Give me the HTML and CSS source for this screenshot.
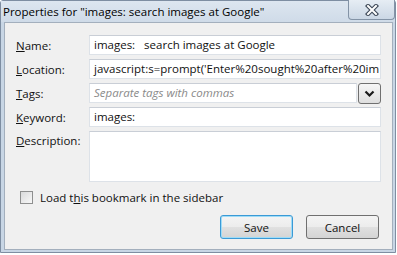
FILE: index.html
```html
<!DOCTYPE html>
<html>
<head>
<meta charset="utf-8">
<link rel="stylesheet" href="styles.css">
</head>
<body>
<div class="window">
  <div class="titlebar">
    <span class="title">Properties for "images: search images at Google"</span>
    <div class="close">
      <svg width="16" height="12" viewBox="0 0 16 12">
        <path d="M4 2 L12 10 M12 2 L4 10" stroke="#3b4656" stroke-width="4.2" stroke-linecap="square" fill="none"/>
        <path d="M4 2 L12 10 M12 2 L4 10" stroke="#ffffff" stroke-width="2" stroke-linecap="square" fill="none"/>
      </svg>
    </div>
  </div>
  <div class="panel">
    <div class="form">
      <div class="lbl"><u>N</u>ame:</div>
      <div class="input">images:&nbsp;&nbsp; search images at Google</div>
      <div class="lbl"><u>L</u>ocation:</div>
      <div class="input">javascript:s=prompt('Enter%20sought%20after%20im</div>
      <div class="lbl"><u>T</u>ags:</div>
      <div class="tagrow">
        <div class="input placeholder">Separate tags with commas</div>
        <div class="drop">
          <svg width="11" height="8" viewBox="0 0 11 8"><path d="M1.5 1.5 L5.5 5.5 L9.5 1.5" stroke="#1a1a1a" stroke-width="2.2" fill="none"/></svg>
        </div>
      </div>
      <div class="lbl"><u>K</u>eyword:</div>
      <div class="input">images:</div>
      <div class="lbl top"><u>D</u>escription:</div>
      <div class="input area"></div>
    </div>
    <div class="check">
      <span class="box"></span>
      <span>Load t<u>h</u>is bookmark in the sidebar</span>
    </div>
    <div class="buttons">
      <div class="btn default">Save</div>
      <div class="btn">Cancel</div>
    </div>
  </div>
</div>
</body>
</html>
```
FILE: styles.css
```css
html, body {
  margin: 0;
  padding: 0;
  background: #ffffff;
}
body {
  font-family: "Open Sans", "Noto Sans", sans-serif;
  font-size: 11.5px;
  color: #111;
}
.window {
  box-sizing: border-box;
  width: 396px;
  height: 253px;
  border: 1px solid #7e8ea2;
  border-radius: 3px 3px 0 0;
  background: #c8d6e5;
  display: flex;
  flex-direction: column;
}
.titlebar {
  height: 21px;
  display: flex;
  align-items: flex-start;
  background: linear-gradient(#dde6f0, #cfdbe8);
}
.title {
  padding: 3px 0 0 2px;
  font-size: 11.5px;
  line-height: 16px;
  color: #000;
}
.close {
  margin-left: auto;
  margin-top: -1px;
  margin-right: 0;
  box-sizing: border-box;
  width: 47px;
  height: 20px;
  border: 1px solid #8393a6;
  border-top: none;
  border-radius: 0 0 4px 4px;
  background: linear-gradient(#e6edf4, #cbd7e5);
  display: flex;
  align-items: center;
  justify-content: center;
}
.panel {
  flex: 1;
  margin: 0 2px 2px 3px;
  border: 1px solid #a3afbd;
  background: #f0f0f0;
  padding: 12px 11px 9px 11px;
  display: flex;
  flex-direction: column;
}
.form {
  display: grid;
  grid-template-columns: 73px 1fr;
  grid-template-rows: 20px 20px 20px 20px 51px;
  row-gap: 4px;
}
.lbl {
  display: flex;
  align-items: center;
  color: #111;
}
.lbl.top {
  align-items: flex-start;
  padding-top: 2px;
}
.input {
  box-sizing: border-box;
  height: 20px;
  background: #fff;
  border: 1px solid #dde2e8;
  border-top-color: #c9ced6;
  padding: 0 4px;
  line-height: 18px;
  white-space: nowrap;
  overflow: hidden;
}
.input.area {
  height: 51px;
}
.placeholder {
  font-style: italic;
  color: #8a8a8a;
}
.tagrow {
  display: flex;
  gap: 1px;
}
.tagrow .input {
  flex: 1;
}
.drop {
  box-sizing: border-box;
  width: 23px;
  height: 21px;
  border: 1px solid #707070;
  border-radius: 3px;
  background: linear-gradient(#f6f6f6, #dedede);
  display: flex;
  align-items: center;
  justify-content: center;
}
.check {
  margin-top: 9px;
  height: 13px;
  padding-left: 4px;
  display: flex;
  align-items: center;
  gap: 7px;
}
.box {
  box-sizing: border-box;
  width: 13px;
  height: 13px;
  border: 1px solid #8e8f8f;
  background: linear-gradient(135deg, #d9dadb, #f8f8f8);
}
.buttons {
  margin-top: 11px;
  margin-right: 2px;
  display: flex;
  justify-content: flex-end;
  gap: 13px;
}
.btn {
  box-sizing: border-box;
  width: 73px;
  height: 24px;
  border: 1px solid #707070;
  border-radius: 3px;
  background: linear-gradient(#f4f4f4 0%, #ececec 50%, #e0e0e0 51%, #d4d4d4 100%);
  display: flex;
  align-items: center;
  justify-content: center;
  color: #111;
}
.btn.default {
  border-color: #3b9ad6;
  box-shadow: inset 0 0 0 1px #9fdcf7;
}
```
